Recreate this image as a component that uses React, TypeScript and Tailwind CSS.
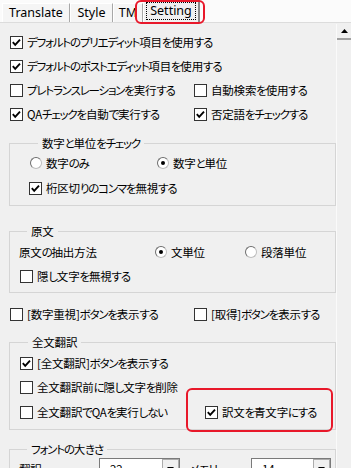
import React from 'react';

const jp = "font-['Noto_Sans_CJK_JP','Noto_Sans',sans-serif] [font-feature-settings:'palt'] tracking-[-0.2px]";

// kana in the original UI font are narrower than in Noto, so squeeze those runs a bit
function JText({ text }: { text: string }) {
  const parts = text.split(/([\u3040-\u30ff]+)/).filter(Boolean);
  return (
    <span className="whitespace-nowrap">
      {parts.map((p, i) =>
        /[\u3040-\u30ff]/.test(p) ? (
          <span key={i} className="tracking-[-1.2px]">{p}</span>
        ) : (
          <span key={i}>{p}</span>
        )
      )}
    </span>
  );
}

function CheckBox({ checked, label, className = '' }: { checked?: boolean; label: string; className?: string }) {
  return (
    <div className={`flex flex-none items-center h-[22px] gap-[4px] ${className}`}>
      <span className="w-[13px] h-[13px] shrink-0 border border-[#333] bg-white flex items-center justify-center">
        {checked && (
          <svg width="11" height="11" viewBox="0 0 11 11">
            <polyline points="1.8,5.2 4.2,7.8 9,2.6" fill="none" stroke="#000" strokeWidth="1.9" />
          </svg>
        )}
      </span>
      <JText text={label} />
    </div>
  );
}

function Radio({ checked, label, className = '' }: { checked?: boolean; label: string; className?: string }) {
  return (
    <div className={`flex flex-none items-center h-[22px] gap-[4px] ${className}`}>
      <span className="w-[12px] h-[12px] shrink-0 rounded-full border border-[#6d6d6d] border-b-[#bdbdbd] border-r-[#bdbdbd] bg-white flex items-center justify-center">
        {checked && <span className="w-[4px] h-[4px] rounded-full bg-black" />}
      </span>
      <JText text={label} />
    </div>
  );
}

function Group({ title, children, className = '' }: { title: string; children: React.ReactNode; className?: string }) {
  return (
    <fieldset className={`w-[327px] border border-[#d5d5d5] ${className}`}>
      <legend className="ml-[8px] px-[4px] leading-[18px]">
        <JText text={title} />
      </legend>
      {children}
    </fieldset>
  );
}

function Combo({ value, className = '' }: { value: string; className?: string }) {
  return (
    <div className={`h-[22px] border border-[#7a7a7a] bg-white flex items-stretch ${className}`}>
      <span className="flex-1 pl-[10px] leading-[20px]">{value}</span>
      <span className="w-[17px] border border-[#acacac] bg-[#f0f0f0] flex items-center justify-center">
        <svg width="7" height="4" viewBox="0 0 7 4">
          <polygon points="0,0 7,0 3.5,4" fill="#000" />
        </svg>
      </span>
    </div>
  );
}

function Tab({ label, selected, className = '' }: { label: string; selected?: boolean; className?: string }) {
  if (selected) {
    return (
      <div className={`h-[22px] bg-[#f0f0f0] border-l border-white border-r-2 border-r-[#8a8a8a] px-[2px] pt-[2px] ${className}`}>
        <div className="h-[18px] border border-dotted border-black flex items-center justify-center">{label}</div>
      </div>
    );
  }
  return (
    <div className={`h-[19px] bg-[#f5f5f5] border-l border-t border-white border-r border-r-[#a8a8a8] flex items-center justify-center ${className}`}>
      {label}
    </div>
  );
}

export default function App() {
  return (
    <div className={`relative w-[351px] h-[468px] overflow-hidden bg-[#f0f0f0] text-[11.5px] text-black ${jp}`}>
      {/* tab strip */}
      <div className="h-[22px] bg-[#fbfbfb] flex items-end pl-[2px] font-['Noto_Sans',sans-serif] text-[12.5px] tracking-normal leading-none">
        <Tab label="Translate" className="w-[68px]" />
        <Tab label="Style" className="w-[43px]" />
        <Tab label="TM" className="w-[30px]" />
        <Tab label="Setting" selected className="w-[57px]" />
      </div>

      <div className="flex h-[446px] border-t border-[#dcdcdc]">
        {/* settings */}
        <div className="flex-1 pl-[9px] pt-[7px] leading-[18px]">
          <CheckBox checked label="デフォルトのプリエディット項目を使用する" className="h-[24px] ml-[1px]" />
          <CheckBox checked label="デフォルトのポストエディット項目を使用する" className="h-[24px] ml-[1px]" />
          <div className="flex h-[24px] ml-[1px]">
            <CheckBox label="プレトランスレーションを実行する" className="w-[184px] h-[24px]" />
            <CheckBox label="自動検索を使用する" className="h-[24px]" />
          </div>
          <div className="flex h-[24px] ml-[1px]">
            <CheckBox checked label="QAチェックを自動で実行する" className="w-[184px] h-[24px]" />
            <CheckBox checked label="否定語をチェックする" className="h-[24px]" />
          </div>

          <Group title="数字と単位をチェック" className="mt-[8px] pl-[20px] pb-[6px]">
            <div className="flex">
              <Radio label="数字のみ" className="w-[127px]" />
              <Radio checked label="数字と単位" />
            </div>
            <CheckBox checked label="桁区切りのコンマを無視する" className="mt-[3px] -ml-[1px]" />
          </Group>

          <Group title="原文" className="mt-[16px] pl-[9px] pt-[1px] pb-[5px]">
            <div className="flex items-center h-[22px]">
              <span className="w-[136px] flex-none"><JText text="原文の抽出方法" /></span>
              <Radio checked label="文単位" className="w-[90px]" />
              <Radio label="段落単位" />
            </div>
            <CheckBox label="隠し文字を無視する" className="mt-[2px] ml-[1px]" />
          </Group>

          <div className="flex mt-[10px] ml-[1px]">
            <CheckBox label="[数字重視]ボタンを表示する" className="w-[184px]" />
            <CheckBox label="[取得]ボタンを表示する" />
          </div>

          <Group title="全文翻訳" className="mt-[8px] pl-[10px] pt-[1px] pb-[6px]">
            <CheckBox checked label="[全文翻訳]ボタンを表示する" />
            <CheckBox label="全文翻訳前に隠し文字を削除" className="mt-[2px]" />
            <div className="flex mt-[3px]">
              <CheckBox label="全文翻訳でQAを実行しない" className="w-[185px]" />
              <CheckBox checked label="訳文を青文字にする" />
            </div>
          </Group>

          <Group title="フォントの大きさ" className="mt-[10px] pl-[9px]">
            <div className="flex items-center h-[22px]">
              <span className="w-[80px] flex-none">翻訳</span>
              <Combo value="22" className="w-[81px] flex-none" />
              <span className="ml-[10px] w-[61px] flex-none"><JText text="メモリ" /></span>
              <Combo value="14" className="w-[80px] flex-none" />
            </div>
          </Group>
        </div>

        {/* vertical scrollbar */}
        <div className="w-[15px] mt-[1px] flex flex-col border-l border-[#fafafa]">
          <div className="h-[16px] bg-[#f0f0f0] border-b-2 border-[#a0a0a0] flex items-center justify-center">
            <svg width="7" height="4" viewBox="0 0 7 4">
              <polygon points="3.5,0 7,4 0,4" fill="#000" />
            </svg>
          </div>
          <div className="flex-1 bg-[#f0f0f0]" />
        </div>
      </div>

      {/* red highlight marks */}
      <div className="absolute left-[135px] top-[0px] w-[70px] h-[24px] border-2 border-[#e8182a] rounded-[6px] pointer-events-none" />
      <div className="absolute left-[186px] top-[388px] w-[147px] h-[44px] border-2 border-[#e8182a] rounded-[6px] pointer-events-none" />
    </div>
  );
}
